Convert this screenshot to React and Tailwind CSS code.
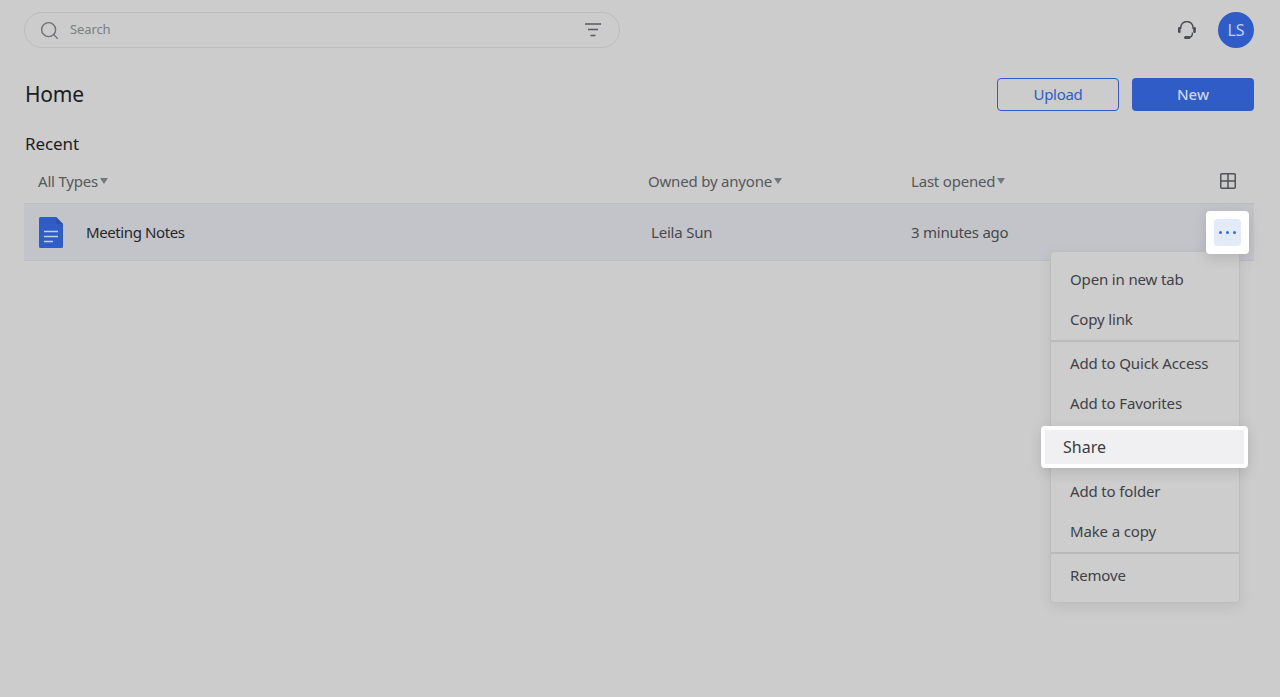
import { Search } from "lucide-react";

const font = { fontFamily: '"Noto Sans", sans-serif' };

/* ================= ICONS ================= */

const FilterIcon = () => (
  <svg width="16" height="14" viewBox="0 0 16 14" fill="none" stroke="#55585e" strokeWidth="1.5">
    <path d="M0 1h16M3 6.5h10M5.5 12.5h5" />
  </svg>
);

const HeadsetIcon = () => (
  <svg width="18" height="18" viewBox="0 0 18 18" fill="none">
    <path d="M2.700 8V6.700a6.200 6.200 0 0 1 12.400 0V8" stroke="#4a4d52" strokeWidth="1.500" />
    <rect x="0" y="6" width="2.600" height="6" rx="1.200" fill="#4a4d52" />
    <rect x="15.200" y="6" width="2.600" height="6" rx="1.200" fill="#4a4d52" />
    <path d="M14.500 11.500c0 3-1.500 4.800-3.500 4.800" stroke="#4a4d52" strokeWidth="1.400" />
    <rect x="6" y="15" width="6.500" height="3" rx="1.500" fill="#4a4d52" />
  </svg>
);

const GridIcon = () => (
  <svg width="16" height="16" viewBox="0 0 16 16" fill="none" stroke="#505358" strokeWidth="1.5">
    <rect x="0.75" y="0.75" width="14.5" height="14.500" rx="1" />
    <path d="M8 1v14M1 8h14" />
  </svg>
);

const DocIcon = () => (
  <svg width="24" height="31" viewBox="0 0 24 31">
    <path d="M1.500 0H17l7 7v22.500a1.500 1.500 0 0 1-1.500 1.500h-21A1.500 1.500 0 0 1 0 29.500v-28A1.500 1.500 0 0 1 1.500 0z" fill="#2f5cc7" />
    <path d="M17 0l7 7h-7z" fill="#2a52b2" />
    <path d="M5 14.500h14M5 19.500h14M5 24.500h9" stroke="#c3cfe9" strokeWidth="1.500" />
  </svg>
);

const Caret = () => (
  <span className="ml-[2px] mt-[1px] h-0 w-0 border-x-[4.500px] border-t-[6px] border-x-transparent border-t-[#74777b]" />
);

const Filter = ({ label, className }) => (
  <div className={`flex items-center text-[15px] leading-5 tracking-[-0.2px] text-[#55585d] ${className}`}>
    <span>{label}</span>
    <Caret />
  </div>
);

/* ================= MENU ================= */

const MenuItem = ({ label }) => (
  <div className="flex h-10 items-center pl-[19px] text-[15px] tracking-[-0.15px] text-[#3f4146]">{label}</div>
);

const Menu = () => (
  <div className="absolute left-[1050px] top-[251px] w-[190px] rounded border border-[#bdbdbd] bg-[#cdcdcd] shadow-[0_4px_14px_rgba(0,0,0,0.08)]">
    <div className="border-b-2 border-[#bababa] pb-[1px] pt-[7px]">
      <MenuItem label="Open in new tab" />
      <MenuItem label="Copy link" />
    </div>
    <div className="pt-[1px]">
      <MenuItem label="Add to Quick Access" />
      <MenuItem label="Add to Favorites" />
    </div>
    <div className="h-[8px]" />
    <div className="relative h-10" />
    <div className="border-b-2 border-[#bababa] pb-[1px]">
      <MenuItem label="Add to folder" />
      <MenuItem label="Make a copy" />
    </div>
    <div className="pb-[7px] pt-[1px]">
      <MenuItem label="Remove" />
    </div>
  </div>
);

/* ================= APP ================= */

export default function App() {
  return (
    <div className="relative h-[697px] w-[1280px] overflow-hidden bg-[#cccccc] pl-6 pr-[26px]" style={font}>
      {/* HEADER */}
      <header className="flex items-start justify-between pt-3">
        <div className="flex h-[36px] w-[596px] items-center rounded-full border border-[#bcbcbc] pl-[14px] pr-[18px]">
          <Search size={21} strokeWidth={1.6} className="text-[#6e7176]" />
          <span className="ml-[10px] text-[13px] tracking-[-0.1px] text-[#7b7e83]">Search</span>
          <span className="ml-auto flex">
            <FilterIcon />
          </span>
        </div>
        <div className="flex items-center gap-[22px]">
          <HeadsetIcon />
          <div className="flex h-9 w-9 items-center justify-center rounded-full bg-[#2f5cc7] text-[16px] text-[#c6d2ea]">
            LS
          </div>
        </div>
      </header>

      {/* TITLE ROW */}
      <div className="mt-[30px] flex items-center justify-between">
        <h1 className="pl-[1px] text-[21px] tracking-[-0.2px] text-[#1b1c1f]">Home</h1>
        <div className="flex gap-[13px]">
          <button className="h-[33px] w-[122px] rounded border border-[#2f5cc7] text-[15px] tracking-[-0.3px] text-[#2f5cc7]">
            Upload
          </button>
          <button className="h-[33px] w-[122px] rounded bg-[#2f5cc7] text-[15px] font-medium text-[#ccd5ea]">
            New
          </button>
        </div>
      </div>

      <h2 className="mt-[21px] pl-[1px] text-[17px] leading-6 tracking-[-0.1px] text-[#1f2023]">Recent</h2>

      {/* TABLE */}
      <div className="mt-[8px] flex h-[40px] items-center border-b border-[#bcbdc1] pb-[6px]">
        <Filter label="All Types" className="ml-[14px] w-[610px]" />
        <Filter label="Owned by anyone" className="w-[263px]" />
        <Filter label="Last opened" className="w-[309px]" />
        <span className="mt-[1px] flex">
          <GridIcon />
        </span>
      </div>
      <div className="flex h-[57px] items-center border-b border-[#bcbdc1] bg-[#c3c4c9]">
        <span className="ml-[15px] flex">
          <DocIcon />
        </span>
        <span className="ml-[23px] w-[565px] text-[15px] tracking-[-0.4px] text-[#26272b]">Meeting Notes</span>
        <span className="w-[260px] text-[15px] tracking-[-0.2px] text-[#47494e]">Leila Sun</span>
        <span className="text-[15px] tracking-[-0.25px] text-[#47494e]">3 minutes ago</span>
      </div>

      <Menu />

      {/* HIGHLIGHTS */}
      <div className="absolute left-[1206px] top-[211px] flex h-[43px] w-[43px] items-center justify-center rounded bg-white shadow-[0_4px_14px_rgba(0,0,0,0.12)]">
        <div className="flex h-[27px] w-[27px] items-center justify-center gap-[4px] rounded bg-[#e3ebfb]">
          <span className="h-[3px] w-[3px] rounded-full bg-[#2f6cf0]" />
          <span className="h-[3px] w-[3px] rounded-full bg-[#2f6cf0]" />
          <span className="h-[3px] w-[3px] rounded-full bg-[#2f6cf0]" />
        </div>
      </div>
      <div className="absolute left-[1041px] top-[426px] h-[42px] w-[207px] rounded border-4 border-white bg-[#f0f0f3] shadow-[0_4px_14px_rgba(0,0,0,0.12)]">
        <div className="flex h-full items-center pl-[18px] text-base text-[#3a3c41]">Share</div>
      </div>
    </div>
  );
}
